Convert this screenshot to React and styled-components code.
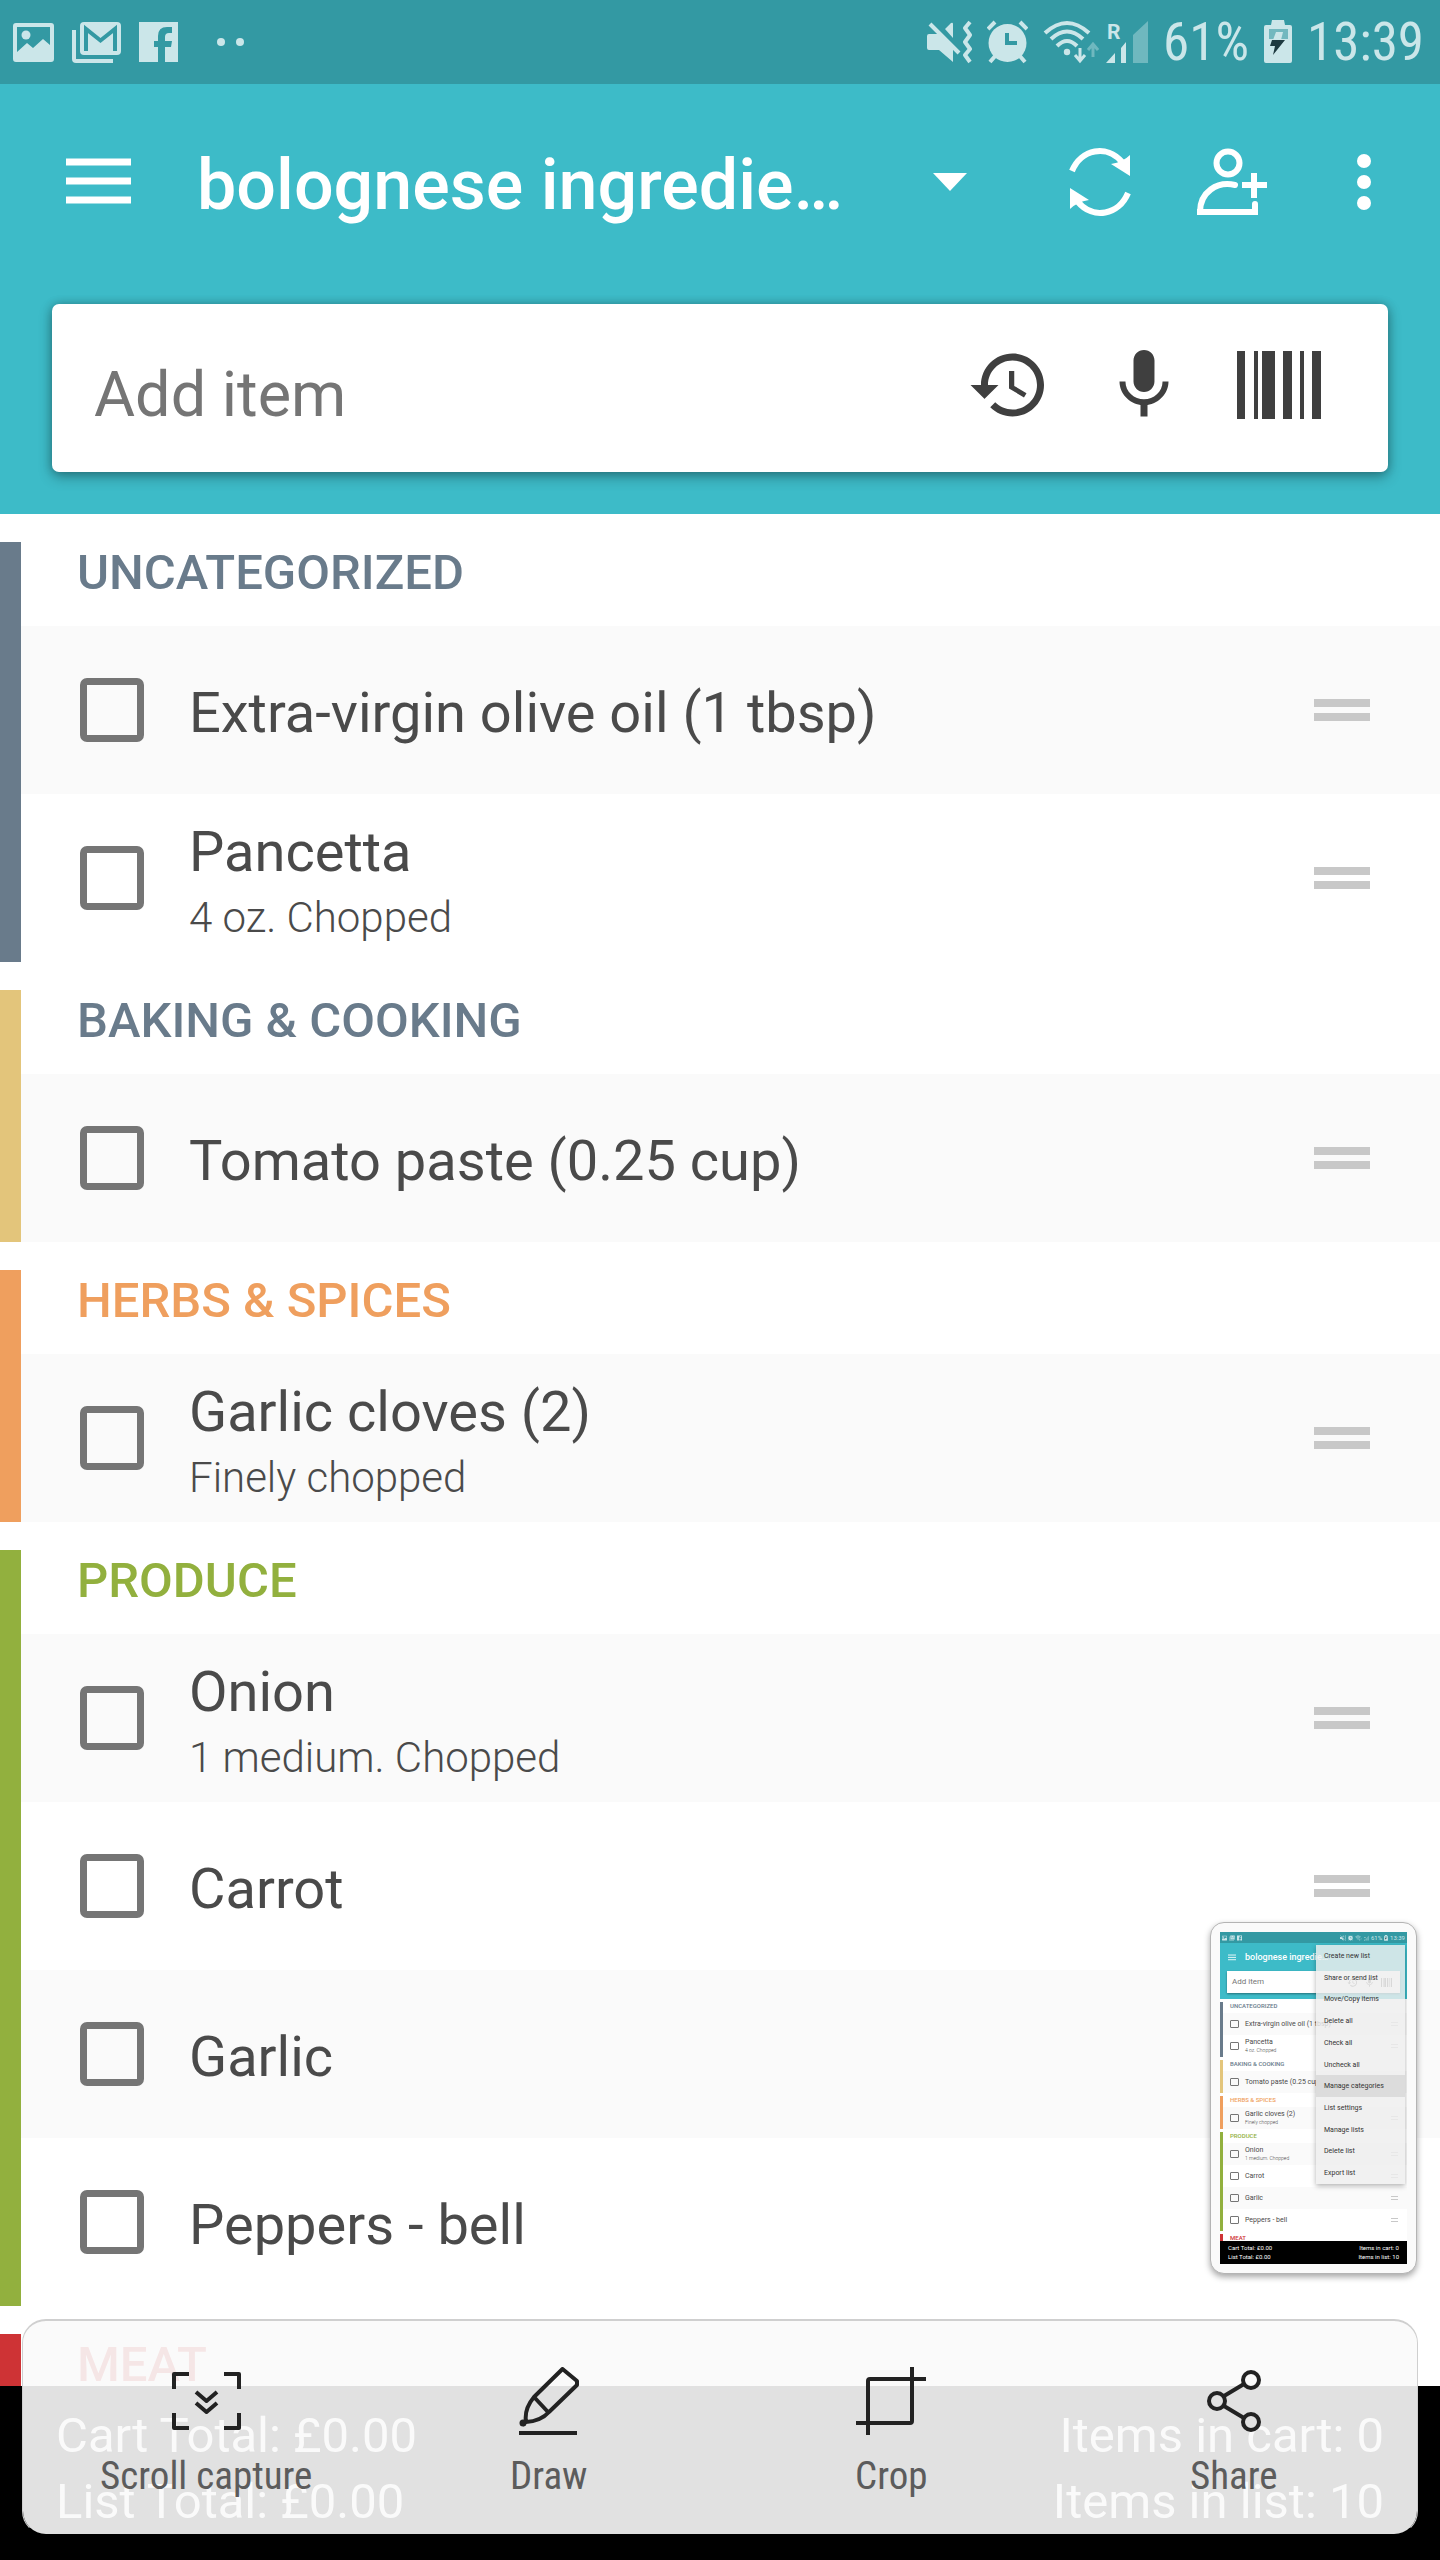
import React from "react";
import styled, { createGlobalStyle } from "styled-components";

const teal = "#3dbbc8";
const tealDark = "#3399a3";
const pale = "#cbe6e9";
const slate = "#697b8b";
const ink = "#4a4a4a";

const GlobalStyle = createGlobalStyle`
  *, *::before, *::after { box-sizing: border-box; }
  html, body { margin: 0; padding: 0; background: #fff; }
  body { font-family: Roboto, "Noto Sans", sans-serif; color: ${ink}; }
  button, input { font: inherit; color: inherit; border: 0; padding: 0; margin: 0; background: none; }
  h1, h2, p, ul { margin: 0; padding: 0; font: inherit; list-style: none; }
  svg { display: block; flex: none; }
`;

const Screen = styled.div`
  position: relative;
  display: flex;
  flex-direction: column;
  height: 100vh;
  overflow: hidden;
  background: #fff;
`;

const StatusBar = styled.div`
  flex: none;
  display: flex;
  align-items: center;
  justify-content: space-between;
  height: 84px;
  padding: 0 16px 0 13px;
  background: ${tealDark};
  color: ${pale};
`;

const StatusGroup = styled.div`
  display: flex;
  align-items: center;
  gap: ${(p) => p.$gap}px;
`;

const StatusText = styled.span`
  font-family: "Roboto Condensed", "Liberation Sans Narrow", Roboto, sans-serif;
  font-size: 53px;
  line-height: 60px;
  white-space: nowrap;
`;

const Header = styled.header`
  flex: none;
  padding-bottom: 42px;
  background: ${teal};
  color: #fff;
`;

const AppBar = styled.div`
  display: flex;
  align-items: center;
  height: 196px;
  padding: 0 10px 0 66px;
`;

const BarButton = styled.button`
  flex: none;
  display: flex;
  align-items: center;
  justify-content: ${(p) => p.$align || "center"};
  width: ${(p) => p.$width || 132}px;
  height: 132px;
`;

const Title = styled.h1`
  flex: 1;
  min-width: 0;
  padding-top: 6px;
  font-size: 70px;
  line-height: 82px;
  font-weight: 500;
  white-space: nowrap;
  overflow: hidden;
`;

const AddCard = styled.form`
  display: flex;
  align-items: center;
  height: 168px;
  margin: 24px 52px 0;
  padding: 0 67px 0 42px;
  border-radius: 7px;
  background: #fff;
  box-shadow: 0 5px 14px rgba(0, 0, 0, 0.3), 0 0 10px rgba(0, 0, 0, 0.22);
`;

const AddInput = styled.input`
  flex: 1;
  min-width: 0;
  padding-top: 14px;
  font-size: 63px;
  line-height: 74px;
  outline: none;
  &::placeholder { color: #757575; opacity: 1; }
`;

const AddActions = styled.div`
  display: flex;
  align-items: center;
  gap: 51px;
  margin-bottom: 7px;
  color: #3f3f3f;
`;

const ActionButton = styled.button`
  display: flex;
  align-items: center;
  justify-content: center;
  width: 84px;
  height: 84px;
`;

const List = styled.main`
  flex: 1;
  min-height: 0;
  overflow: hidden;
`;

const Section = styled.section`
  margin-top: 28px;
  border-left: 21px solid ${(p) => p.$bar};
`;

const SectionTitle = styled.h2`
  height: 84px;
  padding-left: 56px;
  font-size: 49px;
  line-height: 62px;
  font-weight: 500;
  color: ${(p) => p.$color};
`;

const Row = styled.li`
  display: flex;
  align-items: center;
  height: 168px;
  padding: 0 70px 0 59px;
  background: #fff;
  &:nth-child(odd) { background: #fafafa; }
`;

const Check = styled.input`
  appearance: none;
  flex: none;
  width: 64px;
  height: 64px;
  margin-right: 45px;
  border: 7px solid #757575;
  border-radius: 7px;
`;

const RowLabel = styled.label`
  flex: 1;
  display: flex;
  flex-direction: column;
  padding-top: ${(p) => (p.$detailed ? 14 : 6)}px;
`;

const ItemName = styled.span`
  font-size: 56px;
  line-height: 66px;
`;

const ItemNote = styled.span`
  font-size: 42px;
  line-height: 66px;
  font-weight: 300;
`;

const Handle = styled.button`
  flex: none;
  width: 56px;
  height: 22px;
  border-top: 8px solid #c8c8c8;
  border-bottom: 8px solid #c8c8c8;
`;

const Totals = styled.footer`
  flex: none;
  display: flex;
  justify-content: space-between;
  height: 174px;
  padding: 17px 56px 0;
  background: #000;
  color: #fff;
  font-size: 49px;
  line-height: 66px;
`;

const TotalsColumn = styled.div`
  text-align: ${(p) => p.$align};
`;

const CapturePanel = styled.nav`
  position: absolute;
  left: 22px;
  right: 22px;
  bottom: 25px;
  display: flex;
  height: 216px;
  padding: 44px 12px 0;
  border-radius: 24px;
  border: 1px solid #cfcfcf;
  border-top-width: 2px;
  border-bottom-color: transparent;
  background: rgba(250, 250, 250, 0.9);
  background-clip: padding-box;
`;

const CaptureButton = styled.button`
  flex: 1;
  display: flex;
  flex-direction: column;
  align-items: center;
  gap: 16px;
  color: #222;
`;

const CaptureIcon = styled.span`
  display: flex;
  align-items: center;
  justify-content: center;
  height: 72px;
`;

const CaptureLabel = styled.span`
  font-family: "Roboto Condensed", "Liberation Sans Narrow", Roboto, sans-serif;
  font-size: 39px;
  line-height: 46px;
  color: #5c5c5c;
`;

/* Preview of the previous capture */
const Preview = styled.aside`
  position: absolute;
  right: 23px;
  bottom: 286px;
  width: 207px;
  padding: 9px;
  border: 1px solid #b4b4b4;
  border-radius: 14px;
  background: #fafafa;
  box-shadow: 0 3px 6px rgba(0, 0, 0, 0.35);
`;

const MiniScreen = styled.div`
  position: relative;
  display: flex;
  flex-direction: column;
  height: 332px;
  overflow: hidden;
  background: #fff;
`;

const MiniStatus = styled.div`
  display: flex;
  align-items: center;
  justify-content: space-between;
  height: 11px;
  padding: 0 2px;
  background: ${tealDark};
  color: ${pale};
  font-size: 6px;
  line-height: 8px;
`;

const MiniHeader = styled.div`
  height: 56px;
  padding: 0 7px 0 7px;
  background: ${teal};
  color: #fff;
`;

const MiniBar = styled.div`
  display: flex;
  align-items: center;
  gap: 9px;
  height: 28px;
  padding-left: 1px;
  font-size: 9px;
  line-height: 12px;
  font-weight: 500;
`;

const MiniAdd = styled.div`
  display: flex;
  align-items: center;
  justify-content: space-between;
  height: 22px;
  padding: 0 8px 0 5px;
  background: #fff;
  color: #757575;
  font-size: 8px;
  line-height: 12px;
  box-shadow: 0 1px 2px rgba(0, 0, 0, 0.4);
`;

const MiniList = styled.div`
  flex: 1;
  min-height: 0;
  overflow: hidden;
`;

const MiniSection = styled.div`
  margin-top: 3px;
  border-left: 3px solid ${(p) => p.$bar};
`;

const MiniTitle = styled.div`
  height: 11px;
  padding-left: 7px;
  font-size: 6px;
  line-height: 8px;
  font-weight: 500;
  color: ${(p) => p.$color};
`;

const MiniRow = styled.div`
  display: flex;
  align-items: center;
  gap: 6px;
  height: 22px;
  padding: 0 9px 0 7px;
  &:nth-child(even) { background: #fafafa; }
`;

const MiniBox = styled.span`
  width: 9px;
  height: 8px;
  border: 1px solid #757575;
  border-radius: 1px;
`;

const MiniText = styled.span`
  flex: 1;
  display: flex;
  flex-direction: column;
  font-size: 7px;
  line-height: 9px;
  white-space: nowrap;
`;

const MiniNote = styled.span`
  font-size: 5px;
  line-height: 7px;
  font-weight: 300;
`;

const MiniHandle = styled.span`
  width: 7px;
  height: 4px;
  border-top: 1px solid #c8c8c8;
  border-bottom: 1px solid #c8c8c8;
`;

const MiniTotals = styled.div`
  display: flex;
  justify-content: space-between;
  height: 23px;
  padding: 2px 8px;
  background: #000;
  color: #fff;
  font-size: 6px;
  line-height: 9px;
`;

const MiniMenu = styled.ul`
  position: absolute;
  top: 13px;
  right: 2px;
  display: flex;
  flex-direction: column;
  width: 89px;
  height: 239px;
  background: rgba(238, 238, 238, 0.82);
  box-shadow: 0 2px 5px rgba(0, 0, 0, 0.3);
`;

const MiniMenuItem = styled.li`
  flex: 1;
  display: flex;
  align-items: center;
  padding-left: 8px;
  font-size: 7px;
  line-height: 10px;
  color: #333;
  background: ${(p) => (p.$active ? "#dcdcdc" : "transparent")};
`;

function Svg({ w, h, k = 1, children, ...rest }) {
  return (
    <svg width={Math.round(w * k)} height={Math.round(h * k)} viewBox={`0 0 ${w} ${h}`} fill="none" aria-hidden="true" {...rest}>
      {children}
    </svg>
  );
}

const PictureIcon = ({ k }) => (
  <Svg w={41} h={44} k={k}>
    <path fill={pale} fillRule="evenodd" d="M3 3h35a3 3 0 0 1 3 3v33a3 3 0 0 1-3 3H3a3 3 0 0 1-3-3V6a3 3 0 0 1 3-3zm1 4v25l10-9 6 5 10-9 7 6V7z" />
    <circle cx="13" cy="15" r="4.5" fill={pale} />
  </Svg>
);

const MailIcon = ({ k }) => (
  <Svg w={49} h={44} k={k}>
    <path stroke={pale} strokeWidth="4" d="M2 10v29q0 2 2 2h37" />
    <rect x="8" y="2" width="41" height="33" rx="4" fill={pale} />
    <path stroke={tealDark} strokeWidth="4" d="M14 31V9l14.500 11.500L43 9v22" />
  </Svg>
);

const FacebookIcon = ({ k }) => (
  <Svg w={39} h={44} k={k}>
    <path fill={pale} d="M0 2h39v40H26V27h6l1-6h-7v-4q0-4 4-4h3V7h-5q-9 0-9 9v5h-4v6h4v15H0z" />
  </Svg>
);

const MuteIcon = ({ k }) => (
  <Svg w={45} h={44} k={k}>
    <path fill={pale} d="M2 14h9l15 15v13L12 30H2q-2 0-2-2V16q0-2 2-2zM18 9l6-6q2-1 2 1v14z" />
    <path stroke={pale} strokeWidth="4" d="M3 4l29 29" />
    <path stroke={pale} strokeWidth="4" strokeLinejoin="round" d="M43 2l-5 6 5 7-5 7 5 7-5 6 5 7" />
  </Svg>
);

const AlarmIcon = ({ k }) => (
  <Svg w={41} h={44} k={k}>
    <circle cx="20.500" cy="23" r="19" fill={pale} />
    <path stroke={tealDark} strokeWidth="4" d="M20 13v10h10" />
    <path stroke={pale} strokeWidth="4" d="M1 9l7-7M33 2l7 7M3 42l6-7M38 42l-6-7" />
  </Svg>
);

const WifiIcon = ({ k }) => (
  <Svg w={56} h={44} k={k}>
    <path stroke={pale} strokeWidth="4" d="M2 13Q24-7 46 13M8 19q16-15 32 0M14 26q10-10 20 0" />
    <circle cx="24" cy="32" r="3.200" fill={pale} />
    <path stroke={pale} strokeWidth="3" d="M37 28v12M32 35l5 6 5-6" />
    <path stroke={pale} strokeOpacity="0.400" strokeWidth="3" d="M50 37V25M45 30l5-6 5 6" />
  </Svg>
);

const SignalIcon = ({ k }) => (
  <Svg w={42} h={44} k={k}>
    <text x="1" y="19" fill={pale} fontFamily="Roboto, sans-serif" fontSize="21" fontWeight="700">R</text>
    <path fill={pale} d="M0 43l9-10v10zM15 28l5-6v21h-5z" />
    <path fill={pale} fillOpacity="0.400" d="M27 15L42 1v42H27z" />
  </Svg>
);

const BatteryIcon = ({ k }) => (
  <Svg w={28} h={44} k={k}>
    <path fill={pale} d="M8 0h12l1 5h5q2 0 2 2v34q0 2-2 2H2q-2 0-2-2V7q0-2 2-2h5z" />
    <path fill="#72b8bf" d="M5 9h19v10H5z" />
    <path fill={pale} d="M12 12h7l-2 8H9z" />
    <path fill="#1d3a40" d="M8 20h13L9 35l2-9H6z" />
  </Svg>
);

const MenuIcon = ({ k }) => (
  <Svg w={65} h={50} k={k}>
    <path stroke="currentColor" strokeWidth="7" d="M0 5h65M0 24h65M0 43h65" />
  </Svg>
);

const CaretIcon = () => (
  <Svg w={34} h={18}>
    <path fill="currentColor" d="M0 0h34L17 18z" />
  </Svg>
);

const SyncIcon = () => (
  <Svg w={62} h={68}>
    <path stroke="currentColor" strokeWidth="6" d="M3 23C12 1 38-4 53 14M59 45C50 67 24 72 9 54" />
    <path fill="currentColor" d="M61 7v21L42 16q12-2 19-9zM1 61V40l19 12q-12 2-19 9z" />
  </Svg>
);

const AddPersonIcon = () => (
  <Svg w={70} h={68}>
    <circle cx="31" cy="15" r="11.500" stroke="currentColor" strokeWidth="6" />
    <path stroke="currentColor" strokeWidth="6" strokeLinecap="round" d="M38 37C20 33 3 44 3 64h55v-8" />
    <path fill="currentColor" d="M0 61h6v6H0zM55 61h6v6h-6z" />
    <path stroke="currentColor" strokeWidth="6" d="M45 37h25M57 25v25" />
  </Svg>
);

const MoreIcon = () => (
  <Svg w={14} h={56}>
    <circle cx="7" cy="7" r="7" fill="currentColor" />
    <circle cx="7" cy="28" r="7" fill="currentColor" />
    <circle cx="7" cy="49" r="7" fill="currentColor" />
  </Svg>
);

const HistoryIcon = ({ size = 84 }) => (
  <svg width={size} height={size} viewBox="0 0 24 24" fill="currentColor" aria-hidden="true">
    <path d="M13 3c-4.970 0-9 4.030-9 9H1l3.890 3.890.070.140L9 12H6c0-3.870 3.130-7 7-7s7 3.130 7 7-3.130 7-7 7c-1.930 0-3.680-.790-4.940-2.060l-1.420 1.420C8.270 19.990 10.510 21 13 21c4.970 0 9-4.030 9-9s-4.030-9-9-9zm-1 5v5l4.280 2.540.720-1.210-3.500-2.080V8H12z" />
  </svg>
);

const MicIcon = ({ size = 84 }) => (
  <svg width={size} height={size} viewBox="0 0 24 24" fill="currentColor" aria-hidden="true">
    <path d="M12 14c1.660 0 2.990-1.340 2.990-3L15 5c0-1.660-1.340-3-3-3S9 3.340 9 5v6c0 1.660 1.340 3 3 3zm5.300-3c0 3-2.540 5.100-5.300 5.100S6.700 14 6.700 11H5c0 3.410 2.720 6.230 6 6.720V21h2v-3.280c3.280-.480 6-3.300 6-6.720h-1.700z" />
  </svg>
);

const BarcodeIcon = ({ k }) => (
  <Svg w={84} h={68} k={k}>
    <path fill="currentColor" d="M0 0h8v68H0zM17 0h4v68h-4zM25 0h13v68H25zM46 0h9v68h-9zM63 0h4v68h-4zM75 0h9v68h-9z" />
  </Svg>
);

const ScrollIcon = () => (
  <Svg w={69} h={58}>
    <path stroke="currentColor" strokeWidth="4" strokeLinejoin="round" d="M2 17V2h15M52 2h15v15M2 41v15h15M52 56h15V41M24 20l10.500 9L45 20M24 31l10.500 9L45 31" />
  </Svg>
);

const DrawIcon = () => (
  <Svg w={60} h={68}>
    <path stroke="currentColor" strokeWidth="4" strokeLinejoin="round" d="M43.500 2L58 14v4L30 45Q22 54 7 55 5 42 15 30zM15 30l14 15M7 54l-4 4" />
    <circle cx="4" cy="56" r="3.500" fill="currentColor" />
    <path stroke="currentColor" strokeWidth="4" d="M0 66h58" />
  </Svg>
);

const CropIcon = () => (
  <Svg w={70} h={68}>
    <path stroke="currentColor" strokeWidth="4" d="M12 68V14q0-2 2-2h56M0 56h54q2 0 2-2V0" />
  </Svg>
);

const ShareIcon = () => (
  <Svg w={54} h={62}>
    <g stroke="currentColor" strokeWidth="4">
      <circle cx="44" cy="10" r="8" />
      <circle cx="10" cy="31" r="8" />
      <circle cx="44" cy="52" r="8" />
      <path d="M17 26l20-12M17 36l20 12" />
    </g>
  </Svg>
);

const sections = [
  {
    title: "UNCATEGORIZED",
    bar: slate,
    color: slate,
    items: [{ name: "Extra-virgin olive oil (1 tbsp)" }, { name: "Pancetta", note: "4 oz. Chopped" }],
  },
  { title: "BAKING & COOKING", bar: "#e3c57b", color: slate, items: [{ name: "Tomato paste (0.25 cup)" }] },
  {
    title: "HERBS & SPICES",
    bar: "#ef9f5e",
    color: "#ef9f5e",
    items: [{ name: "Garlic cloves (2)", note: "Finely chopped" }],
  },
  {
    title: "PRODUCE",
    bar: "#92b03e",
    color: "#92b03e",
    items: [{ name: "Onion", note: "1 medium. Chopped" }, { name: "Carrot" }, { name: "Garlic" }, { name: "Peppers - bell" }],
  },
  { title: "MEAT", bar: "#ce3335", color: "#ce3335", items: [] },
];

const menuItems = [
  "Create new list",
  "Share or send list",
  "Move/Copy items",
  "Delete all",
  "Check all",
  "Uncheck all",
  "Manage categories",
  "List settings",
  "Manage lists",
  "Delete list",
  "Export list",
];

const captureTools = [
  { label: "Scroll capture", Icon: ScrollIcon },
  { label: "Draw", Icon: DrawIcon },
  { label: "Crop", Icon: CropIcon },
  { label: "Share", Icon: ShareIcon },
];

function Item({ name, note }) {
  const id = name.toLowerCase().replace(/[^a-z]+/g, "-");
  return (
    <Row>
      <Check type="checkbox" id={id} />
      <RowLabel htmlFor={id} $detailed={Boolean(note)}>
        <ItemName>{name}</ItemName>
        {note && <ItemNote>{note}</ItemNote>}
      </RowLabel>
      <Handle type="button" aria-label={`Reorder ${name}`} />
    </Row>
  );
}

function CapturePreview() {
  return (
    <Preview aria-label="Last capture">
      <MiniScreen>
        <MiniStatus>
          <StatusGroup $gap={2}>
            <PictureIcon k={0.13} />
            <MailIcon k={0.13} />
            <FacebookIcon k={0.13} />
          </StatusGroup>
          <StatusGroup $gap={2}>
            <MuteIcon k={0.13} />
            <AlarmIcon k={0.13} />
            <WifiIcon k={0.13} />
            <SignalIcon k={0.13} />
            <span>61%</span>
            <BatteryIcon k={0.13} />
            <span>13:39</span>
          </StatusGroup>
        </MiniStatus>
        <MiniHeader>
          <MiniBar>
            <MenuIcon k={0.13} />
            bolognese ingredie…
          </MiniBar>
          <MiniAdd>
            Add item
            <StatusGroup $gap={6}>
              <HistoryIcon size={11} />
              <MicIcon size={11} />
              <BarcodeIcon k={0.13} />
            </StatusGroup>
          </MiniAdd>
        </MiniHeader>
        <MiniList>
          {sections.map((s) => (
            <MiniSection key={s.title} $bar={s.bar}>
              <MiniTitle $color={s.color}>{s.title}</MiniTitle>
              {s.items.map((i) => (
                <MiniRow key={i.name}>
                  <MiniBox />
                  <MiniText>
                    {i.name}
                    {i.note && <MiniNote>{i.note}</MiniNote>}
                  </MiniText>
                  <MiniHandle />
                </MiniRow>
              ))}
            </MiniSection>
          ))}
        </MiniList>
        <MiniTotals>
          <TotalsColumn $align="left">
            <p>Cart Total: £0.00</p>
            <p>List Total: £0.00</p>
          </TotalsColumn>
          <TotalsColumn $align="right">
            <p>Items in cart: 0</p>
            <p>Items in list: 10</p>
          </TotalsColumn>
        </MiniTotals>
        <MiniMenu>
          {menuItems.map((m) => (
            <MiniMenuItem key={m} $active={m === "Manage categories"}>
              {m}
            </MiniMenuItem>
          ))}
        </MiniMenu>
      </MiniScreen>
    </Preview>
  );
}

export default function App() {
  return (
    <Screen>
      <GlobalStyle />
      <StatusBar>
        <StatusGroup $gap={18}>
          <PictureIcon />
          <MailIcon />
          <FacebookIcon />
          <Svg w={66} h={8}>
            <circle cx="25" cy="4" r="4" fill={pale} />
            <circle cx="44" cy="4" r="4" fill={pale} />
          </Svg>
        </StatusGroup>
        <StatusGroup $gap={15}>
          <MuteIcon />
          <AlarmIcon />
          <StatusGroup $gap={7}>
            <WifiIcon />
            <SignalIcon />
          </StatusGroup>
          <StatusText>61%</StatusText>
          <BatteryIcon />
          <StatusText>13:39</StatusText>
        </StatusGroup>
      </StatusBar>
      <Header>
        <AppBar>
          <BarButton type="button" aria-label="Menu" $align="flex-start" $width={131}>
            <MenuIcon />
          </BarButton>
          <Title>bolognese ingredie…</Title>
          <BarButton type="button" aria-label="Choose list" $width={168}>
            <CaretIcon />
          </BarButton>
          <BarButton type="button" aria-label="Sync">
            <SyncIcon />
          </BarButton>
          <BarButton type="button" aria-label="Add person">
            <AddPersonIcon />
          </BarButton>
          <BarButton type="button" aria-label="More options">
            <MoreIcon />
          </BarButton>
        </AppBar>
        <AddCard onSubmit={(e) => e.preventDefault()}>
          <AddInput type="text" placeholder="Add item" aria-label="Add item" />
          <AddActions>
            <ActionButton type="button" aria-label="History">
              <HistoryIcon />
            </ActionButton>
            <ActionButton type="button" aria-label="Voice input">
              <MicIcon />
            </ActionButton>
            <ActionButton type="button" aria-label="Scan barcode">
              <BarcodeIcon />
            </ActionButton>
          </AddActions>
        </AddCard>
      </Header>
      <List>
        {sections.map((s) => (
          <Section key={s.title} $bar={s.bar}>
            <SectionTitle $color={s.color}>{s.title}</SectionTitle>
            <ul>
              {s.items.map((i) => (
                <Item key={i.name} {...i} />
              ))}
            </ul>
          </Section>
        ))}
      </List>
      <Totals>
        <TotalsColumn $align="left">
          <p>Cart Total: £0.00</p>
          <p>List Total: £0.00</p>
        </TotalsColumn>
        <TotalsColumn $align="right">
          <p>Items in cart: 0</p>
          <p>Items in list: 10</p>
        </TotalsColumn>
      </Totals>
      <CapturePreview />
      <CapturePanel>
        {captureTools.map(({ label, Icon }) => (
          <CaptureButton type="button" key={label}>
            <CaptureIcon>
              <Icon />
            </CaptureIcon>
            <CaptureLabel>{label}</CaptureLabel>
          </CaptureButton>
        ))}
      </CapturePanel>
    </Screen>
  );
}
